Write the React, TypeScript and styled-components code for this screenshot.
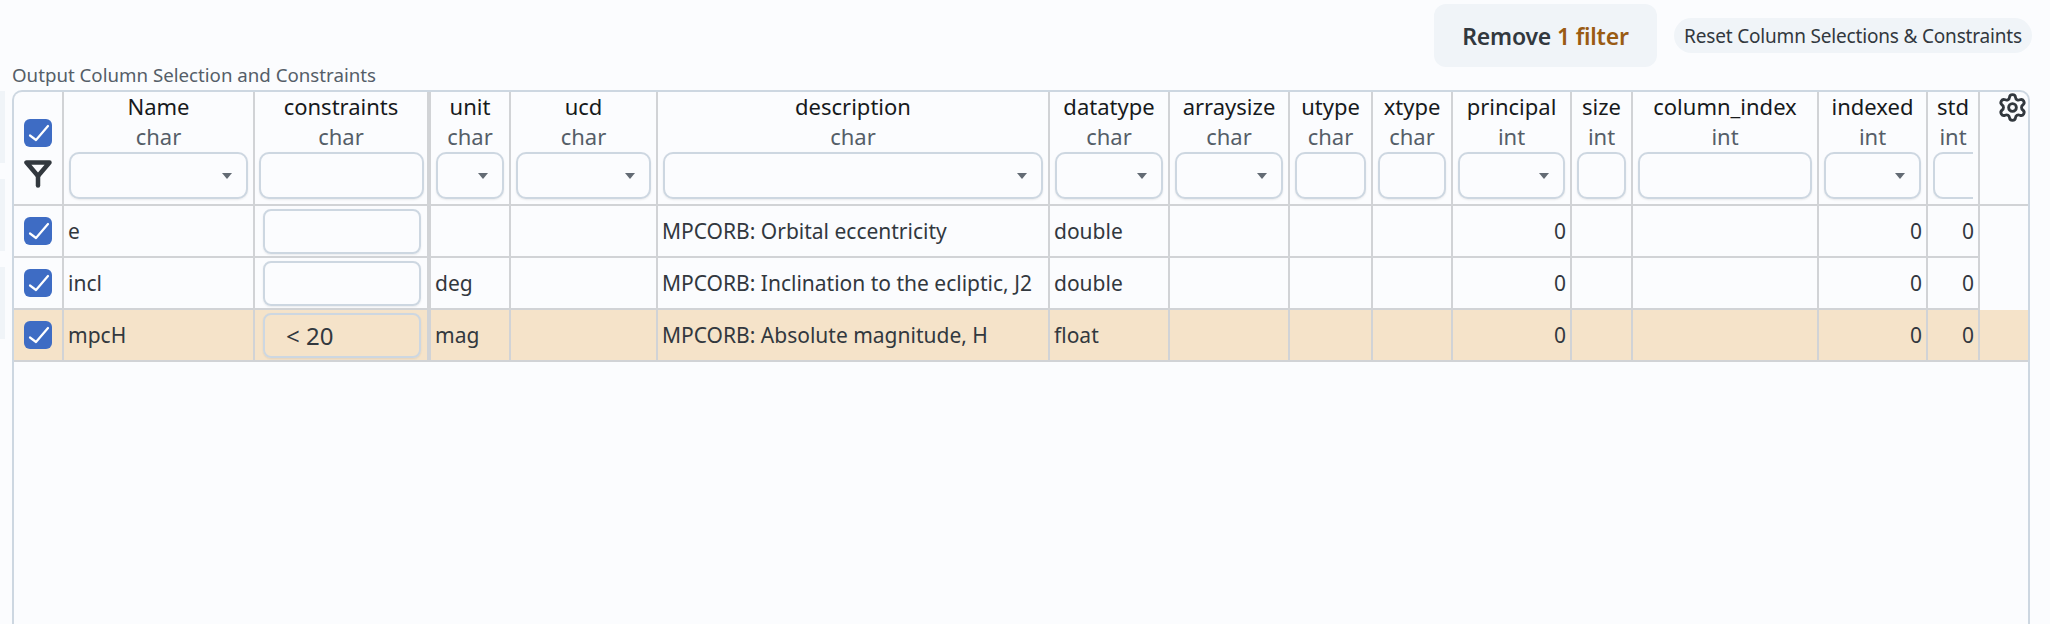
import { createGlobalStyle, styled } from "styled-components";
import { Settings } from "lucide-react";

const GlobalStyle = createGlobalStyle`
    html, body {
        margin: 0;
        background: #fbfcfe;
    }
    body {
        font-family: "Noto Sans", "Open Sans", sans-serif;
        color: #32383e;
    }
`;

const Page = styled.div`
    display: flex;
    width: 2050px;
    height: 624px;
    overflow: hidden;
`;

const Rail = styled.div`
    flex: 0 0 5px;
    display: flex;
    flex-direction: column;
    gap: 16px;
    padding-top: 91px;
`;

const RailTab = styled.div`
    height: 72px;
    background: #f0f4f8;
`;

const Main = styled.div`
    flex: 1;
    padding: 4px 0 0 7px;
`;

const TopBar = styled.div`
    display: flex;
    justify-content: flex-end;
    align-items: center;
    gap: 17px;
    height: 63px;
    padding-right: 18px;
`;

const RemoveButton = styled.button`
    width: 223px;
    height: 63px;
    border: 0;
    border-radius: 12px;
    background: #f0f4f8;
    color: #32383e;
    font: 600 23px "Noto Sans", sans-serif;
    letter-spacing: -0.2px;
`;

const FilterCount = styled.span`
    color: #9a5b13;
`;

const ResetButton = styled.button`
    width: 358px;
    height: 35px;
    padding: 0;
    border: 0;
    border-radius: 18px;
    background: #f0f4f8;
    color: #32383e;
    font: 400 19px "Noto Sans", sans-serif;
    letter-spacing: -0.18px;
`;

const SectionLabel = styled.div`
    height: 23px;
    line-height: 16px;
    font-size: 18.7px;
    color: #555e68;
    white-space: nowrap;
`;

const Frame = styled.div`
    width: 2014px;
    height: 540px;
    border: 2px solid #cdd7e1;
    border-bottom: 0;
    border-radius: 10px 10px 0 0;
`;

const Table = styled.table`
    width: 2014px;
    table-layout: fixed;
    border-collapse: separate;
    border-spacing: 0;
`;

const Th = styled.th<{ $thick?: boolean }>`
    height: 112px;
    padding: 0;
    border-right: ${(p) => (p.$thick ? 4 : 2)}px solid #d1d3d6;
    border-bottom: 2px solid #d1d3d6;
    vertical-align: top;
    font-weight: 400;
    text-align: center;
`;

const ColName = styled.div`
    height: 30px;
    line-height: 28px;
    font-size: 22px;
    color: #171a1c;
    white-space: nowrap;
`;

const ColType = styled.div`
    height: 30px;
    line-height: 28px;
    font-size: 22px;
    color: #555e68;
`;

const FilterWrap = styled.div<{ $clipped?: boolean; $tight?: boolean }>`
    margin: ${(p) => (p.$tight ? "0 3px 0 4px" : "0 5px")};
    overflow: ${(p) => (p.$clipped ? "hidden" : "visible")};
`;

const FilterBox = styled.div<{ $clipped?: boolean }>`
    box-sizing: border-box;
    display: flex;
    align-items: center;
    justify-content: flex-end;
    width: ${(p) => (p.$clipped ? "70px" : "auto")};
    height: 47px;
    padding-right: 14px;
    background: #fbfcfe;
    border: 2px solid #cdd7e1;
    border-radius: 10px;
    box-shadow: 0 1px 2px rgba(21, 21, 21, 0.08);
`;

const SelectCaret = styled.svg`
    width: 10px;
    height: 6px;
    fill: #636b74;
`;

const CheckCell = styled.div`
    display: flex;
    flex-direction: column;
    align-items: center;
    gap: 13px;
    padding-top: 27px;
`;

const CheckBox = styled.div`
    width: 28px;
    height: 28px;
    border-radius: 6px;
    background: #3e6cc4;
`;

const FunnelIcon = styled.svg`
    display: block;
    width: 28px;
    height: 28px;
    fill: none;
    stroke: #32383e;
    stroke-width: 4.5;
    stroke-linejoin: round;
    stroke-linecap: round;
`;

const GearCell = styled.div`
    display: flex;
    justify-content: flex-end;
    color: #32383e;
`;

const Row = styled.tr<{ $marked?: boolean }>`
    background: ${(p) => (p.$marked ? "#f5e3c9" : "transparent")};
`;

const Td = styled.td<{ $thick?: boolean; $num?: boolean; $center?: boolean }>`
    box-sizing: border-box;
    height: 52px;
    padding: 0 ${(p) => (p.$center ? 0 : 4)}px;
    border-right: ${(p) => (p.$thick ? 4 : 2)}px solid #d1d3d6;
    border-bottom: 2px solid #d1d3d6;
    font-size: 21px;
    text-align: ${(p) => (p.$num ? "right" : "left")};
    overflow: hidden;
`;

const EndCell = styled.td<{ $last?: boolean }>`
    padding: 0;
    border-bottom: ${(p) => (p.$last ? "2px solid #d1d3d6" : "0")};
`;

const CellText = styled.div`
    overflow: hidden;
    white-space: nowrap;
`;

const RowCheck = styled.div`
    display: flex;
    justify-content: center;
`;

const ConstraintInput = styled.div`
    box-sizing: border-box;
    height: 45px;
    margin: 0 6px 0 8px;
    padding-left: 21px;
    line-height: 41px;
    font-size: 24px;
    border: 2px solid #cdd7e1;
    border-radius: 8px;
    box-shadow: 0 1px 2px rgba(21, 21, 21, 0.08);
`;

type Column = {
    name: string;
    type: string;
    width: number;
    filter: "select" | "input" | "clipped";
    num?: boolean;
};

const columns: Column[] = [
    { name: "Name", type: "char", width: 191, filter: "select" },
    { name: "constraints", type: "char", width: 176, filter: "input" },
    { name: "unit", type: "char", width: 80, filter: "select" },
    { name: "ucd", type: "char", width: 147, filter: "select" },
    { name: "description", type: "char", width: 392, filter: "select" },
    { name: "datatype", type: "char", width: 120, filter: "select" },
    { name: "arraysize", type: "char", width: 120, filter: "select" },
    { name: "utype", type: "char", width: 83, filter: "input" },
    { name: "xtype", type: "char", width: 80, filter: "input" },
    { name: "principal", type: "int", width: 119, filter: "select", num: true },
    { name: "size", type: "int", width: 61, filter: "input" },
    { name: "column_index", type: "int", width: 186, filter: "input" },
    { name: "indexed", type: "int", width: 109, filter: "select", num: true },
    { name: "std", type: "int", width: 52, filter: "clipped", num: true },
];

const rows = [
    { name: "e", constraint: "", unit: "", description: "MPCORB: Orbital eccentricity", datatype: "double" },
    { name: "incl", constraint: "", unit: "deg", description: "MPCORB: Inclination to the ecliptic, J2", datatype: "double" },
    { name: "mpcH", constraint: "< 20", unit: "mag", description: "MPCORB: Absolute magnitude, H", datatype: "float" },
];

const Check = () => (
    <CheckBox>
        <svg width="28" height="28" viewBox="0 0 28 28" fill="none" stroke="#fff" strokeWidth="2.2" strokeLinecap="round" strokeLinejoin="round">
            <path d="M6 16.5 12 21 24 7" />
        </svg>
    </CheckBox>
);

const Funnel = () => (
    <FunnelIcon viewBox="0 0 28 28">
        <path d="M2.5 2.5H25.5L14 16Z" />
        <path d="M14 16V25.5" />
    </FunnelIcon>
);

const HeaderFilter = ({ kind, tight }: { kind: Column["filter"]; tight?: boolean }) => (
    <FilterWrap $clipped={kind === "clipped"} $tight={tight}>
        <FilterBox $clipped={kind === "clipped"}>
            {kind === "select" && (
                <SelectCaret viewBox="0 0 10 6">
                    <path d="M0 0H10L5 6Z" />
                </SelectCaret>
            )}
        </FilterBox>
    </FilterWrap>
);

export default function App() {
    return (
        <Page>
            <GlobalStyle />
            <Rail>
                <RailTab />
                <RailTab />
                <RailTab />
            </Rail>
            <Main>
                <TopBar>
                    <RemoveButton>
                        Remove <FilterCount>1 filter</FilterCount>
                    </RemoveButton>
                    <ResetButton>Reset Column Selections &amp; Constraints</ResetButton>
                </TopBar>
                <SectionLabel>Output Column Selection and Constraints</SectionLabel>
                <Frame>
                    <Table>
                        <colgroup>
                            <col width={50} />
                            {columns.map((c) => (
                                <col key={c.name} width={c.width} />
                            ))}
                            <col width={48} />
                        </colgroup>
                        <thead>
                            <tr>
                                <Th>
                                    <CheckCell>
                                        <Check />
                                        <Funnel />
                                    </CheckCell>
                                </Th>
                                {columns.map((c) => (
                                    <Th key={c.name} $thick={c.name === "constraints"}>
                                        <ColName>{c.name}</ColName>
                                        <ColType>{c.type}</ColType>
                                        <HeaderFilter kind={c.filter} tight={c.name === "constraints"} />
                                    </Th>
                                ))}
                                <EndCell as="th" $last style={{ verticalAlign: "top" }}>
                                    <GearCell>
                                        <Settings size={31} strokeWidth={2.2} />
                                    </GearCell>
                                </EndCell>
                            </tr>
                        </thead>
                        <tbody>
                            {rows.map((r, i) => (
                                <Row key={r.name} $marked={r.name === "mpcH"}>
                                    <Td $center>
                                        <RowCheck>
                                            <Check />
                                        </RowCheck>
                                    </Td>
                                    {columns.map((c) => {
                                        if (c.name === "constraints") {
                                            return (
                                                <Td key={c.name} $thick $center>
                                                    <ConstraintInput>{r.constraint}</ConstraintInput>
                                                </Td>
                                            );
                                        }
                                        const values: Record<string, string> = {
                                            Name: r.name,
                                            unit: r.unit,
                                            description: r.description,
                                            datatype: r.datatype,
                                        };
                                        const text = c.num ? "0" : values[c.name] ?? "";
                                        return (
                                            <Td key={c.name} $num={c.num}>
                                                <CellText>{text}</CellText>
                                            </Td>
                                        );
                                    })}
                                    <EndCell $last={i === rows.length - 1} />
                                </Row>
                            ))}
                        </tbody>
                    </Table>
                </Frame>
            </Main>
        </Page>
    );
}
